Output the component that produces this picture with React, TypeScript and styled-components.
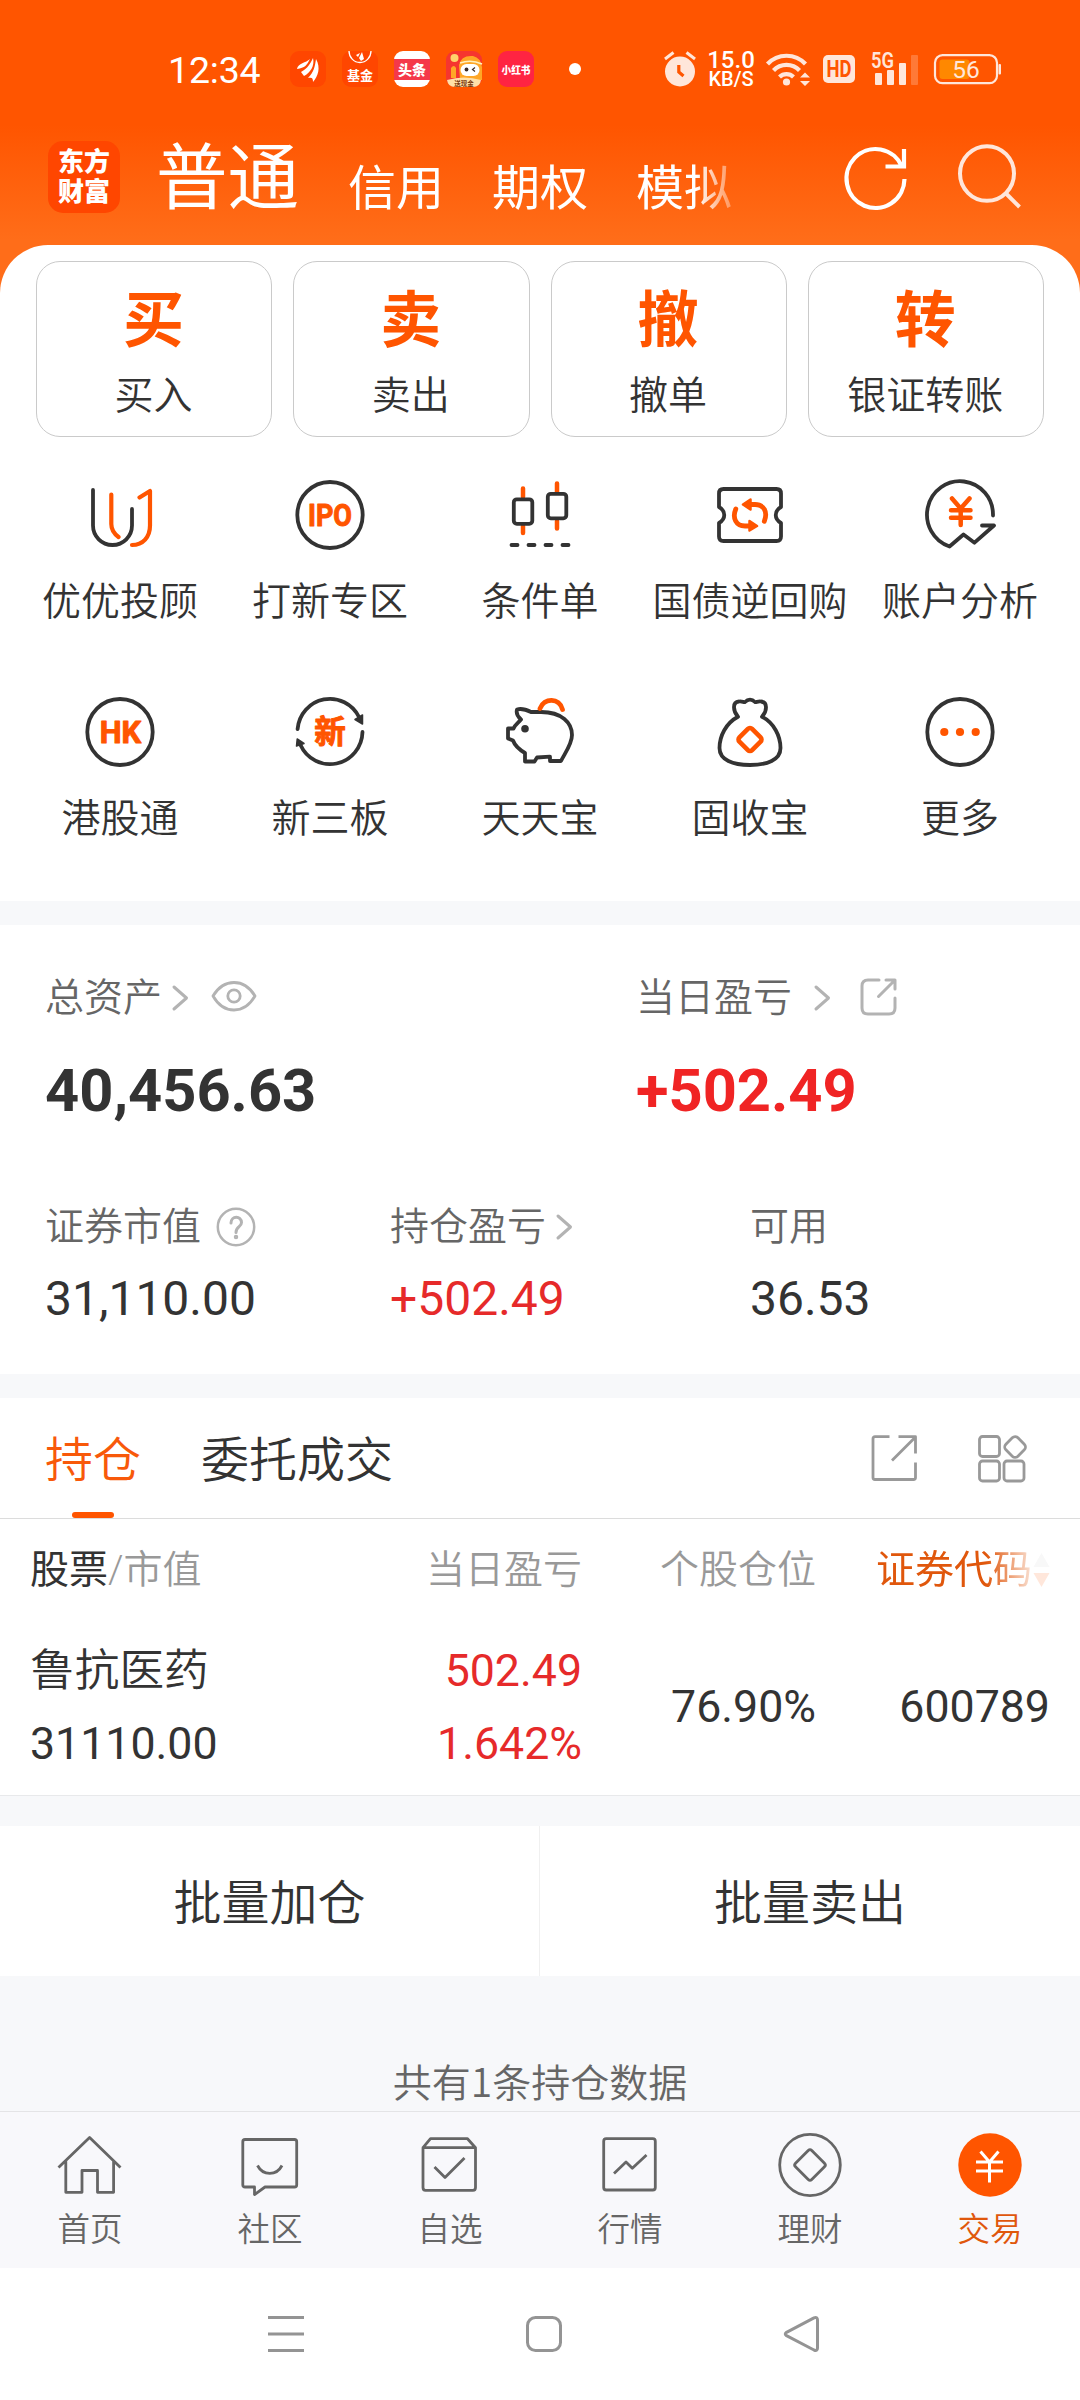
import React from "react";
import styled, { createGlobalStyle, css } from "styled-components";

const ORANGE = "#ff5500";
const INK = "#333333";
const cjk = `"Noto Sans CJK SC", sans-serif`;
const ui = `Roboto, "Noto Sans CJK SC", sans-serif`;

const Global = createGlobalStyle`
  body { margin: 0; background: #fff; }
  * { box-sizing: border-box; }
  svg { display: block; flex: none; overflow: visible; }
`;

const Screen = styled.div`
  width: 1080px;
  height: 2400px;
  overflow: hidden;
  display: flex;
  flex-direction: column;
  font-family: ${ui};
  font-weight: 350;
  color: ${INK};
  background: #f7f8fa;
  white-space: nowrap;
`;

/* ---------- top ---------- */
const Top = styled.header`
  height: 293px;
  flex: none;
  background: linear-gradient(#ff5500 0, #ff5500 125px, #ff6d19 240px, #ff6d19 100%);
`;
const StatusBar = styled.div`
  height: 138px;
  display: flex;
  align-items: center;
  justify-content: space-between;
  padding: 0 79px 0 168px;
  color: #fff;
`;
const StatusLeft = styled.div`
  display: flex;
  align-items: center;
  gap: 16px;
`;
const Clock = styled.span`
  width: 106px;
  font-size: 37.5px;
  line-height: 44px;
  font-weight: 450;
  letter-spacing: -0.2px;
  padding-top: 1px;
`;
const Dot = styled.i`
  width: 12px;
  height: 12px;
  margin-left: 19px;
  border-radius: 50%;
  background: #fff;
`;
const StatusRight = styled.div`
  display: flex;
  align-items: center;
  gap: 12px;
`;
const Speed = styled.div`
  width: 46px;
  display: flex;
  flex-direction: column;
  align-items: center;
  font-weight: 500;
`;
const SpeedValue = styled.span`
  font-size: 24px;
  line-height: 20px;
`;
const SpeedUnit = styled.span`
  font-size: 20px;
  line-height: 18px;
`;
const AccountBar = styled.div`
  display: flex;
  align-items: flex-start;
  height: 107px;
  padding: 0 57px 0 48px;
  color: #fff;
`;
const Logo = styled.div`
  width: 72px;
  height: 72px;
  margin-top: 3px;
  border-radius: 15px;
  background: #ff4600;
  display: flex;
  flex-direction: column;
  justify-content: center;
  align-items: center;
  font-size: 26px;
  line-height: 30px;
  font-weight: 900;
  span { display: block; }
`;
const AccountTabs = styled.nav`
  display: flex;
  align-items: baseline;
  gap: 48px;
  margin-left: 36px;
  height: 92px;
  width: 590px;
  font-weight: 400;
  -webkit-mask-image: linear-gradient(90deg, #000 540px, transparent 592px);
  mask-image: linear-gradient(90deg, #000 540px, transparent 592px);
`;
const AccountTab = styled.span<{ $active?: boolean }>`
  font-size: ${(p) => (p.$active ? 71.5 : 48)}px;
  line-height: ${(p) => (p.$active ? 82 : 84)}px;
  ${(p) => (p.$active ? css`margin-right: 1px;` : css`transform: translateY(2px);`)}
`;
const HeaderActions = styled.div`
  display: flex;
  gap: 49px;
  margin: 6px 0 0 auto;
`;

/* ---------- shortcuts ---------- */
const Sheet = styled.section`
  height: 656px;
  flex: none;
  margin-top: -48px;
  padding: 16px 15px 0;
  border-radius: 48px 48px 0 0;
  background: #fff;
`;
const TradeCards = styled.div`
  display: flex;
  gap: 21px;
  padding: 0 21px;
`;
const TradeCard = styled.div`
  flex: 1 1 0;
  height: 176px;
  border: 1px solid #cacaca;
  border-radius: 24px;
  display: flex;
  flex-direction: column;
  align-items: center;
  padding: 21px 1px 0 0;
`;
const TradeGlyph = styled.span`
  font: 700 61px/66px ${cjk};
  color: ${ORANGE};
`;
const TradeLabel = styled.span`
  font-size: 39px;
  line-height: 48px;
  margin-top: 23px;
`;
const Features = styled.div`
  display: grid;
  grid-template-columns: repeat(5, 210px);
  grid-auto-rows: 217px;
  padding-top: 42px;
`;
const Feature = styled.div`
  display: flex;
  flex-direction: column;
  align-items: center;
  font-size: 39px;
  line-height: 48px;
  gap: 27px;
`;

/* ---------- assets ---------- */
const Assets = styled.section`
  height: 449px;
  flex: none;
  margin-top: 24px;
  padding: 48px 45px 0;
  background: #fff;
`;
const AssetRow = styled.div<{ $cols: string }>`
  display: grid;
  grid-template-columns: ${(p) => p.$cols};
`;
const Label = styled.div<{ $gap: number }>`
  display: flex;
  align-items: center;
  gap: ${(p) => p.$gap}px;
  height: 50px;
  font-size: 39px;
  line-height: 50px;
  color: #666;
`;
const Total = styled.div<{ $up?: boolean }>`
  margin-top: 33px;
  font-size: 59.6px;
  line-height: 70px;
  font-weight: 700;
  ${(p) => p.$up && css`color: #f02424;`}
`;
const Amount = styled.div<{ $up?: boolean }>`
  margin-top: 19px;
  font-size: 48px;
  line-height: 56px;
  font-weight: 400;
  ${(p) => p.$up && css`color: #e62a2a;`}
`;
const Spacer = styled.div`
  height: 76px;
`;
const IconSlot = styled.span<{ $left: number; $lift: number }>`
  display: block;
  margin-left: ${(p) => p.$left}px;
  padding-bottom: ${(p) => p.$lift}px;
`;

/* ---------- holdings ---------- */
const Holdings = styled.section`
  height: 398px;
  flex: none;
  margin-top: 24px;
  background: #fff;
  border-bottom: 1px solid #e8e9eb;
`;
const TabBar = styled.div`
  height: 121px;
  display: flex;
  align-items: center;
  padding: 0 52px 0 45px;
  gap: 60px;
  border-bottom: 1px solid #dcdcdc;
`;
const Tab = styled.div<{ $active?: boolean }>`
  height: 120px;
  font-size: 48px;
  line-height: 126px;
  color: ${(p) => (p.$active ? "#f8590a" : INK)};
  display: flex;
  flex-direction: column;
  align-items: center;
  &::after {
    content: "";
    display: ${(p) => (p.$active ? "block" : "none")};
    flex: none;
    width: 42px;
    height: 6px;
    margin-top: -12px;
    border-radius: 3px;
    background: ${ORANGE};
  }
`;
const TabTools = styled.div`
  display: flex;
  align-items: center;
  gap: 60px;
  margin: 0 0 0 auto;
`;
const columns = css`
  display: grid;
  grid-template-columns: 302px 250px 234px 234px;
  padding: 0 30px;
`;
const TableHead = styled.div`
  ${columns}
  height: 102px;
  font-size: 39px;
  line-height: 102px;
  color: #999;
`;
const HeadCell = styled.div<{ $end?: boolean }>`
  text-align: ${(p) => (p.$end ? "right" : "left")};
  b { font-weight: 400; color: ${INK}; }
`;
const SortedCell = styled.div`
  display: flex;
  align-items: center;
  justify-content: flex-end;
  gap: 1px;
  color: #e0570c;
  font-weight: 400;
  -webkit-mask-image: linear-gradient(90deg, #000 170px, rgba(0, 0, 0, 0.14) 218px);
  mask-image: linear-gradient(90deg, #000 170px, rgba(0, 0, 0, 0.14) 218px);
`;
const TableRow = styled.div`
  ${columns}
  font-size: 44.7px;
  font-weight: 400;
  align-items: center;
  height: 172px;
`;
const Cell = styled.div<{ $end?: boolean; $up?: boolean }>`
  display: flex;
  flex-direction: column;
  gap: 13px;
  line-height: 60px;
  text-align: ${(p) => (p.$end ? "right" : "left")};
  ${(p) => p.$up && css`color: #e62a2a;`}
`;
const StockName = styled.span`
  font-weight: 350;
`;
const Batch = styled.section`
  display: grid;
  grid-template: 150px / 539px 541px;
  flex: none;
  height: 150px;
  margin-top: 30px;
`;
const BatchButton = styled.div`
  display: flex;
  align-items: center;
  justify-content: center;
  padding-top: 6px;
  background: #fff;
  font-size: 48px;
  line-height: 60px;
  & + & { border-left: 1px solid #f0f0f0; }
`;
const Summary = styled.div`
  flex: none;
  height: 135px;
  padding-top: 79px;
  font: 350 39px/50px ${cjk};
  text-align: center;
  color: #666;
`;

/* ---------- bottom ---------- */
const BottomNav = styled.nav`
  flex: none;
  height: 157px;
  display: grid;
  grid-template-columns: repeat(6, 1fr);
  border-top: 1px solid #e4e4e6;
  background: #f8f8fb;
`;
const NavItem = styled.div<{ $active?: boolean }>`
  display: flex;
  flex-direction: column;
  align-items: center;
  padding-top: 17px;
  gap: 9px;
  font-size: 32.5px;
  line-height: 41px;
  color: ${(p) => (p.$active ? "#e0570c" : "#666")};
`;
const SystemNav = styled.div`
  flex: none;
  height: 132px;
  display: flex;
  align-items: center;
  justify-content: center;
  gap: 218px;
  padding-left: 8px;
  background: #fff;
`;

/* ---------- icons ---------- */
const line = {
  fill: "none",
  stroke: INK,
  strokeWidth: 3.8,
  strokeLinecap: "round" as const,
  strokeLinejoin: "round" as const,
};
const Icon = ({ children, size = 72 }: { children: React.ReactNode; size?: number }) => (
  <svg width={size} height={size} viewBox={`0 0 ${size} ${size}`} {...line}>
    {children}
  </svg>
);
const ring = <ellipse cx="36" cy="36" rx="32.7" ry="33" />;
const glyph = { fill: ORANGE, stroke: ORANGE, strokeWidth: 1, fontFamily: ui, fontWeight: 700, textAnchor: "middle" as const };

const features: [string, React.ReactNode][] = [
  ["优优投顾", <>
    <path d="M9 11V46.500A19.500 19.500 0 0 0 48 46.500V30" />
    <g stroke={ORANGE} strokeWidth="4.200">
      <path d="M27.300 15.500V45C27.300 51 30.500 55 34.500 58" />
      <path d="M55.500 18.500L66 12V46.500C66 58 59 66 48 66" />
    </g>
  </>],
  ["打新专区", <>{ring}<text x="36" y="47" fontSize="31" textLength="44" lengthAdjust="spacingAndGlyphs" {...glyph}>IPO</text></>],
  ["条件单", <>
    <path d="M19 9.500V18M19 47V54M53 4.500V13M53 42V49.500" stroke={ORANGE} strokeWidth="4.500" />
    <rect x="9.800" y="20.300" width="18.500" height="24.500" rx="3" />
    <rect x="43.800" y="14.800" width="18.500" height="24.500" rx="3" />
    <path d="M7.500 66H13.500M24.500 66H30.500M41.500 66H47.500M58.500 66H64.500" />
  </>],
  ["国债逆回购", <>
    <path d="M9.500 10H62.500Q67 10 67 14.500V28C60 32 60 40 67 44V57.500Q67 62 62.500 62H9.500Q5 62 5 57.500V44C12 40 12 32 5 28V14.500Q5 10 9.500 10Z" />
    <g stroke={ORANGE} strokeWidth="4.800">
      <path d="M21.800 30C18 39 22 47 31 47H36M50.300 42.300C54 33 50 25.500 41 25.500H36" />
      <path d="M36.500 20.500L29 25.500L36.500 30.500ZM35.500 42L43 47L35.500 51.500Z" fill={ORANGE} strokeWidth="2.500" />
    </g>
  </>],
  ["账户分析", <>
    <path d="M69 36.500A33 33.500 0 1 0 25.500 67.500L39.500 55.500L50.500 63.700L70 46.500H58" />
    <path d="M28 19.500L36.700 29.500L45.500 19.500M36.700 30V46M27 31.300H46.500M27 38.800H46.500" stroke={ORANGE} strokeWidth="4.500" />
  </>],
  ["港股通", <>{ring}<text x="36.500" y="47" fontSize="30.500" textLength="41.500" lengthAdjust="spacingAndGlyphs" {...glyph}>HK</text></>],
  ["新三板", <>
    <path d="M3.600 33A32.500 33 0 0 1 65 21M68.500 36A32.500 33 0 0 1 6.500 49" />
    <path d="M61 23.500L68.500 19V28ZM3.200 43L10 47.500L2.500 50Z" fill={INK} strokeWidth="1.500" />
    <text x="36" y="46.500" fontSize="31.500" {...glyph} fontFamily={cjk}>新</text>
  </>],
  ["天天宝", <>
    <path d="M17 23.500C13 20 12 17 13 13.500C18 12 23 14 27 16H37C58 16 68 27 68 39C68 48 61 57 57 65H46V60.700L33 61.500L30.500 65.500H21V57C16 54 11 50 9 44.500L4 42.500V32.500H9.500C11 28.500 14 27 17 23.500Z" />
    <circle cx="21" cy="32.700" r="3.800" fill={INK} stroke="none" />
    <path d="M36 12.500C40 1.500 55.500 1.500 58.500 13.500" stroke={ORANGE} strokeWidth="4.800" />
  </>],
  ["固收宝", <>
    <path d="M24 20.700C19 15 18 6 25 5.500C28 5 30 6.500 31 6C34 3 38 3 41 6C42 6.500 44 5 47 5.500C54 6 53 15 48 20.700C60 27 66.500 40 66.500 52C66.500 64 53 69 36 69C19 69 5.500 64 5.500 52C5.500 40 12 27 24 20.700Z" />
    <rect x="27" y="34.500" width="18" height="18" rx="3" transform="rotate(45 36 43.500)" stroke={ORANGE} strokeWidth="4.600" />
  </>],
  ["更多", <>{ring}<g fill={ORANGE} stroke="none"><circle cx="20.300" cy="36" r="4.100" /><circle cx="36" cy="36" r="4.100" /><circle cx="51.700" cy="36" r="4.100" /></g></>],
];

const thin = { ...line, stroke: "#666", strokeWidth: 2.800, strokeLinecap: "butt" as const };
const navItems: [string, React.ReactNode][] = [
  ["首页", <path d="M4.500 38.500L35.600 8.500L66.500 38.500M11.800 32V63.300H28V41.500H43.500V63.300H59.600V32" />],
  ["社区", <>
    <path d="M11 10.500H60.500Q62.700 10.500 62.700 12.700V56Q62.700 58 60.500 58H31L20.500 65.500V58H11Q8.800 58 8.800 56V12.700Q8.800 10.500 11 10.500Z" />
    <path d="M23.500 36.500C29 47 42.500 47 48 36.500" />
  </>],
  ["自选", <>
    <path d="M9 18.700L16.500 9.700H53.500L61.500 18.700V58.500Q61.500 61.300 59 61.300H11.500Q9 61.300 9 58.500V18.700H61.500" />
    <path d="M20.500 38L31 48.500L50.500 29" />
  </>],
  ["行情", <><rect x="9.700" y="9.700" width="51.600" height="51.300" rx="2.500" /><path d="M20 44.500L32 33L38.300 39.300L52.500 26" /></>],
  ["理财", <><ellipse cx="36" cy="36" rx="30.300" ry="30.600" /><rect x="24.500" y="24.500" width="23" height="23" rx="2.500" transform="rotate(45 36 36)" /></>],
  ["交易", <>
    <circle cx="36" cy="36" r="31.700" fill={ORANGE} stroke="none" />
    <path d="M26.500 22.500L35.500 33L44.500 22.500M35.500 33V53.500M22 33H49M22 42H49" stroke="#fff" strokeWidth="3" />
  </>],
];

const Chevron = () => (
  <svg width="18" height="28" viewBox="0 0 18 28" {...line} stroke="#b3b3b3" strokeWidth="3">
    <path d="M3 3L15.500 14L3 25" />
  </svg>
);

const AppBadges = () => (
  <>
    <svg width="36" height="36" viewBox="0 0 36 36">
      <rect width="36" height="36" rx="9" fill="#ff4600" />
      <path d="M7 18C8 12 16 12 20 8C17 14 15 17 7 18ZM11 21C18 17 20 13 23 7C25 15 20 22 14 25ZM18 27C24 21 25 15 26 8C31 17 28 25 23 31C23 27 22 26 18 27Z" fill="#fff" />
    </svg>
    <svg width="36" height="36" viewBox="0 0 36 36">
      <rect width="36" height="36" rx="9" fill="#ff4600" />
      <path d="M7 0A11 11.500 0 0 0 29 0" fill="none" stroke="#fff" strokeWidth="1.300" />
      <path d="M14 4L18 2L16 6ZM17 7L20 1L22 8L19 10Z" fill="#fff" />
      <text x="18" y="28.500" fontSize="13" fontWeight="700" fontFamily={cjk} fill="#fff" textAnchor="middle">基金</text>
    </svg>
    <svg width="36" height="36" viewBox="0 0 36 36">
      <rect width="36" height="36" rx="9" fill="#fff" />
      <rect y="8" width="36" height="21" fill="#f5384a" />
      <text x="18" y="24" fontSize="14" fontWeight="900" fontFamily={cjk} fill="#fff" textAnchor="middle">头条</text>
    </svg>
    <svg width="36" height="36" viewBox="0 0 36 36">
      <rect width="36" height="36" rx="9" fill="#f6352f" />
      <path d="M5 17Q8 13 10 17V27H5ZM13 14Q15 4 27 5Q35 7 36 16V29H14Z" fill="#ffa726" />
      <circle cx="8.500" cy="7" r="4" fill="#ffd36b" />
      <path d="M14 12Q25 8 36 13" stroke="#fff0c0" strokeWidth="1.500" fill="none" />
      <rect x="14.500" y="13" width="19" height="12" rx="6" fill="#fff" />
      <circle cx="20.500" cy="18.500" r="1.900" fill="#3a2b26" />
      <path d="M29 16.500L26.500 18.500L29 20.500" stroke="#3a2b26" strokeWidth="1.200" fill="none" />
      <path d="M1 29Q18 24 35 29Q34 36 27 36H9Q2 36 1 29Z" fill="#ffe0a8" />
      <text x="18" y="34.500" fontSize="6.500" fontWeight="700" fontFamily={cjk} fill="#7c3a10" textAnchor="middle">送现金</text>
    </svg>
    <svg width="36" height="36" viewBox="0 0 36 36">
      <rect width="36" height="36" rx="9" fill="#ff2442" />
      <text x="18" y="22.500" fontSize="10.500" fontWeight="900" fontFamily={cjk} fill="#fff" textAnchor="middle" textLength="29" lengthAdjust="spacingAndGlyphs">小红书</text>
    </svg>
  </>
);

const soft = "#ffe6da";
const StatusIcons = () => (
  <StatusRight>
    <svg width="32" height="36" viewBox="0 0 32 36" fill="none" stroke={soft}>
      <circle cx="16" cy="20.500" r="15" fill={soft} stroke="none" />
      <path d="M1 8L9.500 1.500M31 8L22.500 1.500" strokeWidth="3" />
      <path d="M14.800 14V21L19.500 25" stroke={ORANGE} strokeWidth="3.200" />
    </svg>
    <Speed><SpeedValue>15.0</SpeedValue><SpeedUnit>KB/S</SpeedUnit></Speed>
    <svg width="45" height="36" viewBox="0 0 45 36" fill="none" stroke={soft} strokeWidth="4.200">
      <path d="M1.500 13A26 26 0 0 1 39.500 13M7.500 19.500A18 18 0 0 1 33.500 19.500M13.500 26A10 10 0 0 1 27.500 26" />
      <circle cx="20.500" cy="31" r="3.600" fill={soft} stroke="none" />
      <path d="M34 26.500L39 21.500L44 26.500ZM34 30L39 35L44 30Z" fill={soft} stroke="none" />
    </svg>
    <svg width="32" height="28" viewBox="0 0 32 28">
      <rect width="32" height="28" rx="5" fill={soft} />
      <text x="16" y="22.300" fontSize="23.500" fontWeight="700" fontFamily={ui} fill={ORANGE} textAnchor="middle" textLength="25" lengthAdjust="spacingAndGlyphs">HD</text>
    </svg>
    <svg width="51" height="34" viewBox="0 0 51 34" fill={soft}>
      <text x="4" y="16" fontSize="21.500" fontWeight="600" fontFamily={ui} textLength="23" lengthAdjust="spacingAndGlyphs">5G</text>
      <rect x="8" y="21" width="7" height="12" rx="1" />
      <rect x="20" y="18" width="7" height="15" rx="1" />
      <rect x="32" y="11" width="7" height="22" rx="1" />
      <rect x="44" y="3" width="7" height="30" rx="1" opacity="0.250" />
    </svg>
    <svg width="71" height="30" viewBox="0 0 71 30">
      <rect x="5" y="1.200" width="62" height="28" rx="7.500" fill="none" stroke={soft} strokeWidth="2.200" />
      <rect x="9.500" y="5.500" width="30" height="19.500" rx="3" fill="#ff8800" />
      <rect x="68.500" y="10" width="2.500" height="10.500" rx="1" fill={soft} />
      <text x="36" y="24" fontSize="24.500" fontFamily={ui} fontWeight="400" fill={soft} textAnchor="middle">56</text>
    </svg>
  </StatusRight>
);

export default function App() {
  return (
    <Screen>
      <Global />
      <Top>
        <StatusBar>
          <StatusLeft>
            <Clock>12:34</Clock>
            <AppBadges />
            <Dot />
          </StatusLeft>
          <StatusIcons />
        </StatusBar>
        <AccountBar>
          <Logo><span>东方</span><span>财富</span></Logo>
          <AccountTabs>
            <AccountTab $active>普通</AccountTab>
            <AccountTab>信用</AccountTab>
            <AccountTab>期权</AccountTab>
            <AccountTab>模拟</AccountTab>
          </AccountTabs>
          <HeaderActions>
            <svg width="64" height="68" viewBox="0 0 64 68" {...line} stroke="#fff" strokeWidth="4.200" strokeLinecap="butt" strokeLinejoin="miter">
              <path d="M60.500 35A29 29.500 0 1 1 58 22.500M41.500 22.500H60V5" />
            </svg>
            <svg width="66" height="68" viewBox="0 0 66 68" {...line} stroke={soft} strokeWidth="4" strokeLinecap="butt">
              <ellipse cx="30" cy="29.500" rx="27" ry="27.300" /><path d="M48.500 49L62.500 63" />
            </svg>
          </HeaderActions>
        </AccountBar>
      </Top>

      <Sheet>
        <TradeCards>
          {[["买", "买入"], ["卖", "卖出"], ["撤", "撤单"], ["转", "银证转账"]].map(([g, t]) => (
            <TradeCard key={t}><TradeGlyph>{g}</TradeGlyph><TradeLabel>{t}</TradeLabel></TradeCard>
          ))}
        </TradeCards>
        <Features>
          {features.map(([name, art]) => (
            <Feature key={name}><Icon>{art}</Icon>{name}</Feature>
          ))}
        </Features>
      </Sheet>

      <Assets>
        <AssetRow $cols="591px 1fr">
          <div>
            <Label $gap={9}>
              总资产<Chevron />
              <IconSlot $left={13} $lift={3}>
                <svg width="46" height="34" viewBox="0 0 46 34" {...line} stroke="#b3b3b3" strokeWidth="2.800">
                  <path d="M2 16C8 6 15 2.500 23 2.500S38 6 44 16C38 26.500 31 30 23 30S8 26.500 2 16Z" /><circle cx="23" cy="16" r="6.200" />
                </svg>
              </IconSlot>
            </Label>
            <Total>40,456.63</Total>
          </div>
          <div>
            <Label $gap={21}>
              当日盈亏<Chevron />
              <IconSlot $left={7} $lift={2}>
                <svg width="40" height="42" viewBox="0 0 40 42" {...line} stroke="#b3b3b3" strokeWidth="3">
                  <path d="M20 4H9Q3 4 3 10V32Q3 38 9 38H30Q36 38 36 32V22M27 4H36V13M19.500 20.500L35 5" />
                </svg>
              </IconSlot>
            </Label>
            <Total $up>+502.49</Total>
          </div>
        </AssetRow>
        <Spacer />
        <AssetRow $cols="345px 360px 1fr">
          <div>
            <Label $gap={15}>
              证券市值
              <svg width="40" height="42" viewBox="0 0 40 42" {...line} stroke="#b3b3b3" strokeWidth="2.500">
                <circle cx="20" cy="21" r="18.200" />
                <path d="M15 17C15 9.500 25.500 9.500 25.500 16.500C25.500 21 20 20.500 20 26.500" strokeWidth="3" />
                <circle cx="20" cy="31" r="1" />
              </svg>
            </Label>
            <Amount>31,110.00</Amount>
          </div>
          <div>
            <Label $gap={9}>持仓盈亏<Chevron /></Label>
            <Amount $up>+502.49</Amount>
          </div>
          <div>
            <Label $gap={0}>可用</Label>
            <Amount>36.53</Amount>
          </div>
        </AssetRow>
      </Assets>

      <Holdings>
        <TabBar>
          <Tab $active>持仓</Tab>
          <Tab>委托成交</Tab>
          <TabTools>
            <svg width="48" height="48" viewBox="0 0 48 48" {...thin} stroke="#999">
              <path d="M19.500 2.700H5Q3 2.700 3 4.700V43.500Q3 45.500 5 45.500H43.500Q45.500 45.500 45.500 43.500V28.500M28.500 2.700H45.500V19.500M22 26.500L44.500 4" />
            </svg>
            <svg width="50" height="48" viewBox="0 0 50 48" {...thin} stroke="#999">
              <rect x="1.500" y="2.500" width="20" height="20" rx="3" />
              <rect x="1.500" y="27" width="20" height="20" rx="3" />
              <rect x="26" y="27" width="20" height="20" rx="3" />
              <rect x="28.600" y="4.500" width="17" height="17" rx="4" transform="rotate(45 37.100 13)" />
            </svg>
          </TabTools>
        </TabBar>
        <TableHead>
          <HeadCell><b>股票</b>/市值</HeadCell>
          <HeadCell $end>当日盈亏</HeadCell>
          <HeadCell $end>个股仓位</HeadCell>
          <SortedCell>
            证券代码
            <svg width="17" height="34" viewBox="0 0 17 34">
              <path d="M8.500 0L16.500 14H0.500Z" fill="#ccc" /><path d="M8.500 34L16.500 20H0.500Z" fill={ORANGE} />
            </svg>
          </SortedCell>
        </TableHead>
        <TableRow>
          <Cell><StockName>鲁抗医药</StockName><span>31110.00</span></Cell>
          <Cell $end $up><span>502.49</span><span>1.642%</span></Cell>
          <Cell $end>76.90%</Cell>
          <Cell $end>600789</Cell>
        </TableRow>
      </Holdings>

      <Batch>
        <BatchButton>批量加仓</BatchButton>
        <BatchButton>批量卖出</BatchButton>
      </Batch>
      <Summary>共有1条持仓数据</Summary>

      <BottomNav>
        {navItems.map(([name, art], i) => (
          <NavItem key={name} $active={i === 5}>
            <svg width="72" height="72" viewBox="0 0 72 72" {...thin}>{art}</svg>
            {name}
          </NavItem>
        ))}
      </BottomNav>
      <SystemNav>
        <svg width="40" height="40" viewBox="0 0 40 40" {...line} stroke="#949494" strokeWidth="3" strokeLinecap="butt">
          <path d="M2 3.500H38M2 20H38M2 36.500H38" />
        </svg>
        <svg width="40" height="40" viewBox="0 0 40 40" {...line} stroke="#949494" strokeWidth="3">
          <rect x="3.500" y="3.500" width="33" height="33" rx="8" />
        </svg>
        <svg width="40" height="40" viewBox="0 0 40 40" {...line} stroke="#949494" strokeWidth="3">
          <path d="M4.500 18.300L32 3.800Q35.500 2.500 35.500 6V34Q35.500 37.500 32 36L4.500 21.700Q2 20 4.500 18.300Z" />
        </svg>
      </SystemNav>
    </Screen>
  );
}
